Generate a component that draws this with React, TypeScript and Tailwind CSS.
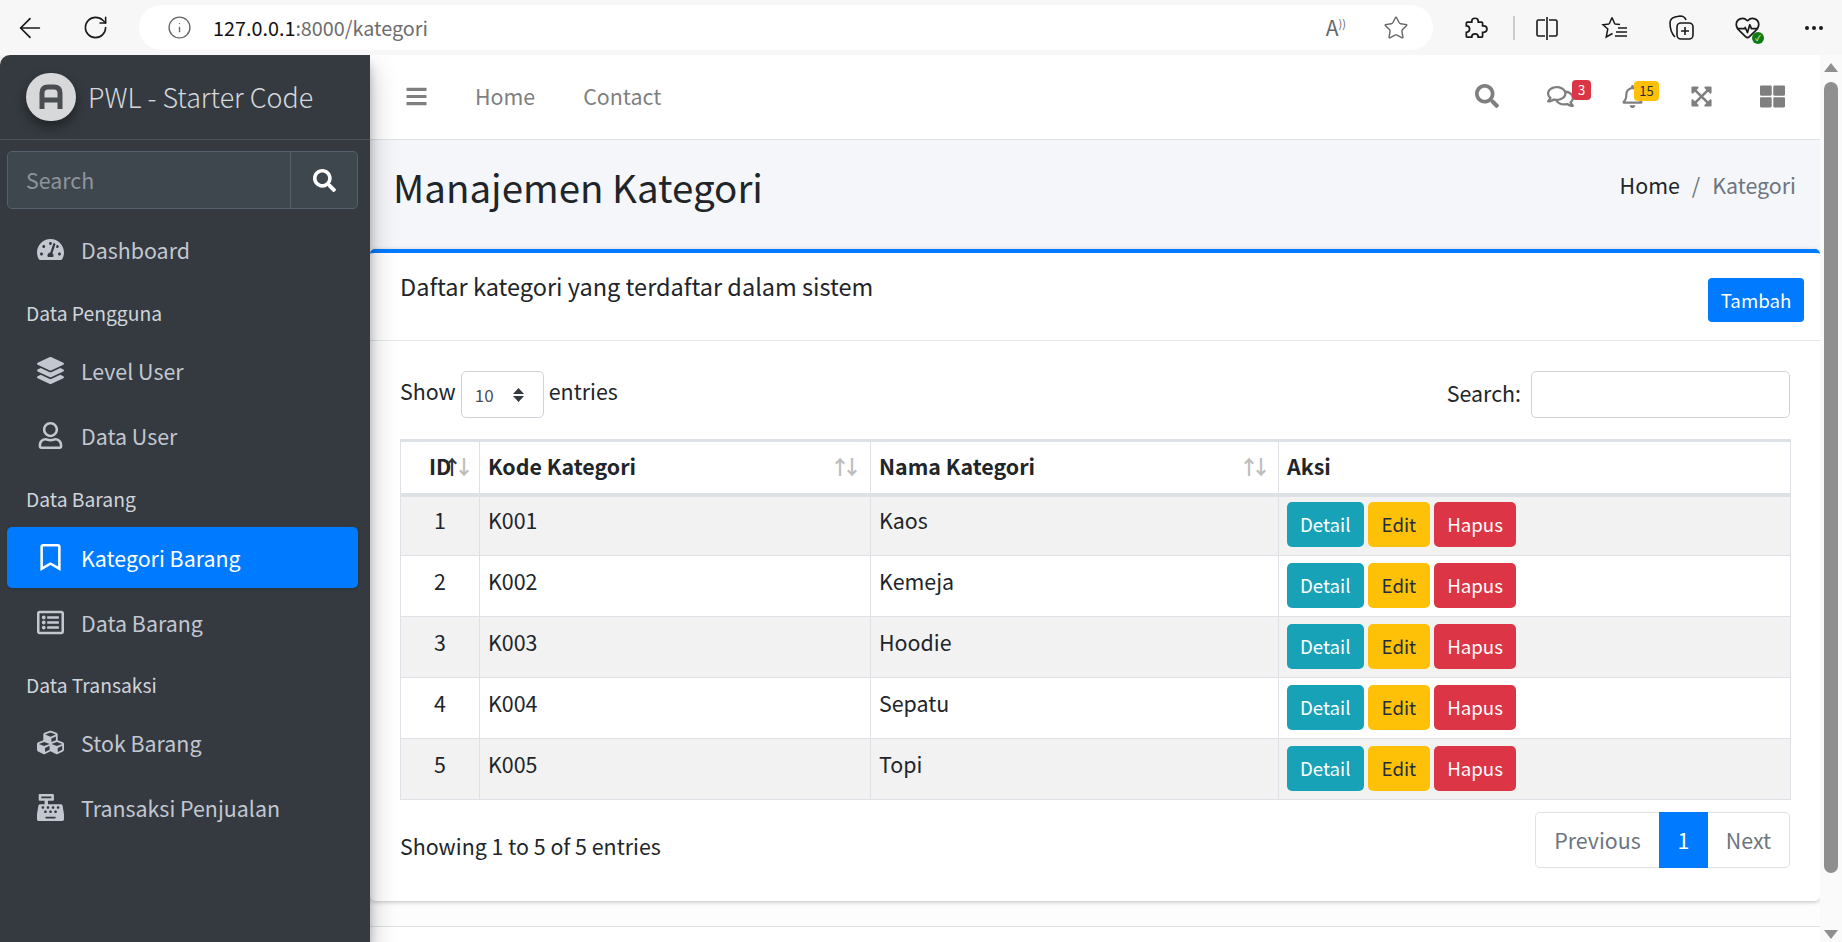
import { ArrowLeft, HeartPulse, Info, RotateCw, Star, MoreHorizontal } from "lucide-react";
import {
  FaBars,
  FaCashRegister,
  FaCubes,
  FaExpandArrowsAlt,
  FaLayerGroup,
  FaRegBell,
  FaRegBookmark,
  FaRegComments,
  FaRegListAlt,
  FaRegUser,
  FaSearch,
  FaTachometerAlt,
  FaThLarge,
} from "react-icons/fa";

const font = "font-['Noto_Sans_CJK_SC','Noto_Sans',sans-serif]";

const rows = [
  { id: 1, kode: "K001", nama: "Kaos" },
  { id: 2, kode: "K002", nama: "Kemeja" },
  { id: 3, kode: "K003", nama: "Hoodie" },
  { id: 4, kode: "K004", nama: "Sepatu" },
  { id: 5, kode: "K005", nama: "Topi" },
];

function BrowserBar() {
  return (
    <div className="relative z-20 flex h-[55px] items-center bg-[#f7f7f7] text-[#1a1a1a]">
      <div className="flex w-[139px] items-center pl-[14px] gap-[36px]">
        <ArrowLeft size={32} strokeWidth={1.3} />
        <RotateCw size={27} strokeWidth={1.4} />
      </div>
      <div className="flex h-[45px] w-[1294px] items-center rounded-full bg-white pl-[28px] pr-[24px]">
        <Info size={25} strokeWidth={1.3} className="text-[#666]" />
        <div className="ml-[21px] flex-1 text-[19.800px] leading-[26px] text-[#6d6d6d]">
          <span className="text-[#111]">127.0.0.1</span>:8000/kategori
        </div>
        <div className="mr-[37px] text-[21px] leading-none text-[#666]">
          A<span className="text-[11px] align-super">))</span>
        </div>
        <Star size={26} strokeWidth={1.3} className="text-[#666]" />
      </div>
      <div className="flex flex-1 items-center pl-[29px]">
        <svg width="26" height="26" viewBox="0 0 24 24" fill="none" stroke="#1a1a1a" strokeWidth="1.6">
          <path d="M9 6.500V6a3 3 0 0 1 6 0v.500h3a1 1 0 0 1 1 1V10h1a3 3 0 0 1 0 6h-1v3.500a1 1 0 0 1-1 1h-3a3 3 0 0 0-6 0H5a1 1 0 0 1-1-1V16a3 3 0 0 0 0-6V7.500a1 1 0 0 1 1-1z" />
        </svg>
        <div className="ml-[25px] h-[24px] w-[2px] bg-[#ccc]" />
        <svg width="26" height="26" viewBox="0 0 26 26" fill="none" stroke="#1a1a1a" strokeWidth="1.6" className="ml-[19px]">
          <path d="M11 5H4.500A1.500 1.500 0 0 0 3 6.500v13A1.500 1.500 0 0 0 4.500 21H11M13 2v23M15 5h6.500A1.500 1.500 0 0 1 23 6.500v13a1.500 1.500 0 0 1-1.500 1.500H15" />
        </svg>
        <svg width="28" height="26" viewBox="0 0 28 26" fill="none" stroke="#1a1a1a" strokeWidth="1.5" className="ml-[41px]">
          <path d="M11 2.500L13.800 9M8.200 9L11 2.500M8.200 9L2 9.800L6.800 14L5.200 22L11.500 18.500M13.800 9L19 9.500" />
          <path d="M17 13h9M15 17h11M14 21h12" />
        </svg>
        <svg width="27" height="27" viewBox="0 0 27 27" fill="none" stroke="#1a1a1a" strokeWidth="1.6" className="ml-[39px]">
          <path d="M7 23C4 20 2 15 2 9c0-3 1.500-5 5-6l5-1c3 0 5 1 6 4" />
          <rect x="9" y="9" width="16" height="16" rx="4" />
          <path d="M17 13v8M13 17h8" />
        </svg>
        <div className="relative ml-[39px]">
          <HeartPulse size={27} strokeWidth={1.5} />
          <div className="absolute bottom-[-3px] right-[-3px] flex h-[12px] w-[12px] items-center justify-center rounded-full bg-[#107c10] text-[8px] leading-none text-white">
            ✓
          </div>
        </div>
        <MoreHorizontal size={24} className="ml-[41px]" />
      </div>
    </div>
  );
}

function SideLink({ icon, label, active }: { icon: React.ReactNode; label: string; active?: boolean }) {
  return (
    <div
      className={`ml-[7px] mr-[12px] mb-[4px] flex h-[61px] items-center rounded-[5px] pl-[30px] text-[21.400px] leading-[30px] ${
        active ? "bg-[#007bff] text-white shadow-sm" : "text-[#c2c7d0]"
      }`}
    >
      <div className="flex w-[37px] justify-start text-[27px]">{icon}</div>
      <span className="ml-[7px]">{label}</span>
    </div>
  );
}

function SideHeader({ label, className }: { label: string; className: string }) {
  return <div className={`pl-[26px] text-[19.300px] leading-[26px] text-[#d0d4db] ${className}`}>{label}</div>;
}

function Sidebar() {
  return (
    <aside className="relative z-10 flex w-[370px] shrink-0 flex-col rounded-tl-[10px] bg-[#343a40] shadow-[0_14px_28px_rgba(0,0,0,0.25),0_10px_10px_rgba(0,0,0,0.22)]">
      <div className="flex h-[85px] items-center border-b border-[#4b545c] pl-[26px]">
        <div className="flex h-[48px] w-[50px] items-center justify-center rounded-full bg-[#d6d8da] shadow-[0_6px_12px_rgba(0,0,0,0.4)]">
          <svg width="26" height="26" viewBox="0 0 26 26" fill="none" stroke="#4a4d52" strokeWidth="5">
            <path d="M4 25V9c0-4 2-6 6-6h6c4 0 6 2 6 6v16M4 16h18" />
          </svg>
        </div>
        <div className="ml-[12px] text-[26.900px] font-light leading-[36px] text-[#d5d8dc]">PWL - Starter Code</div>
      </div>
      <div className="ml-[7px] mr-[12px] mt-[11px] flex h-[58px] rounded-[5px] border border-[#56606a] bg-[#3f474e]">
        <div className="flex flex-1 items-center pl-[18px] text-[21.400px] text-[#8d949b]">Search</div>
        <div className="flex w-[67px] items-center justify-center border-l border-[#56606a] text-[23px] text-white">
          <FaSearch />
        </div>
      </div>
      <div className="mt-[10px]">
        <SideLink icon={<FaTachometerAlt />} label="Dashboard" />
      </div>
      <SideHeader label="Data Pengguna" className="mt-[16px]" />
      <div className="mt-[14px]">
        <SideLink icon={<FaLayerGroup />} label="Level User" />
        <SideLink icon={<FaRegUser />} label="Data User" />
      </div>
      <SideHeader label="Data Barang" className="mt-[16px]" />
      <div className="mt-[15px]">
        <SideLink icon={<FaRegBookmark />} label="Kategori Barang" active />
        <SideLink icon={<FaRegListAlt />} label="Data Barang" />
      </div>
      <SideHeader label="Data Transaksi" className="mt-[15px]" />
      <div className="mt-[14px]">
        <SideLink icon={<FaCubes />} label="Stok Barang" />
        <SideLink icon={<FaCashRegister />} label="Transaksi Penjualan" />
      </div>
    </aside>
  );
}

function Navbar() {
  return (
    <div className="flex h-[85px] items-center border-b border-[#dee2e6] bg-white pb-[2px] pl-[35px] pr-[35px] text-[#7f7f7f]">
      <FaBars size={23} />
      <div className="ml-[47px] text-[21.400px] leading-[30px]">Home</div>
      <div className="ml-[48px] text-[21.400px] leading-[30px]">Contact</div>
      <div className="flex-1" />
      <FaSearch size={24} />
      <div className="relative ml-[48px]">
        <FaRegComments size={27} />
        <div className="absolute left-[25px] top-[-3px] flex h-[20px] w-[19px] items-center justify-center rounded-[4px] bg-[#dc3545] text-[13px] leading-none text-white">
          3
        </div>
      </div>
      <div className="relative ml-[47px]">
        <FaRegBell size={23} />
        <div className="absolute left-[13px] top-[-4px] flex h-[20px] w-[25px] items-center justify-center rounded-[4px] bg-[#ffc107] text-[13px] leading-none text-[#1f2d3d]">
          15
        </div>
      </div>
      <FaExpandArrowsAlt size={23} className="ml-[46px]" />
      <FaThLarge size={25} className="ml-[47px]" />
    </div>
  );
}

function SortIcon({ active, right }: { active?: boolean; right: string }) {
  return (
    <span className={`absolute top-[11px] text-[20px] font-bold leading-[28px] tracking-[-8px] ${right}`}>
      <span className={active ? "text-[#333]" : "text-[#bdbdbd]"}>↑</span>
      <span className="text-[#bdbdbd]">↓</span>
    </span>
  );
}

function ActionButton({ label, color }: { label: string; color: string }) {
  return <div className={`flex h-[45px] items-center rounded-[5px] text-[18.700px] leading-none ${color}`}>{label}</div>;
}

function KategoriTable() {
  return (
    <table className="mt-[21px] w-[1391px] table-fixed border-collapse text-[21.400px] leading-[30px] text-[#212529]">
      <thead>
        <tr className="h-[54px] border-x border-t-[3px] border-b-[4px] border-x-[#dee2e6] border-t-[#dee2e6] border-b-[#dee2e6] font-bold">
          <th className="relative w-[79px] border-r border-[#dee2e6] pb-[2px] pl-[28px] text-left">
            ID
            <SortIcon active right="right-[13px]" />
          </th>
          <th className="relative w-[391px] border-r border-[#dee2e6] pb-[2px] pl-[8px] text-left">
            Kode Kategori
            <SortIcon right="right-[16px]" />
          </th>
          <th className="relative w-[408px] border-r border-[#dee2e6] pb-[2px] pl-[8px] text-left">
            Nama Kategori
            <SortIcon right="right-[15px]" />
          </th>
          <th className="pb-[2px] pl-[8px] text-left">Aksi</th>
        </tr>
      </thead>
      <tbody>
        {rows.map((row, i) => (
          <tr key={row.id} className={`h-[61px] border border-[#dee2e6] ${i % 2 === 0 ? "bg-[#f2f2f2]" : "bg-white"}`}>
            <td className="border-r border-[#dee2e6] pb-[11px] text-center">{row.id}</td>
            <td className="border-r border-[#dee2e6] pb-[11px] pl-[8px]">{row.kode}</td>
            <td className="border-r border-[#dee2e6] pb-[11px] pl-[8px]">{row.nama}</td>
            <td className="pb-[2px] pl-[8px]">
              <div className="flex gap-[4px]">
                <ActionButton label="Detail" color="bg-[#17a2b8] px-[13px] text-white" />
                <ActionButton label="Edit" color="bg-[#ffc107] px-[14px] text-[#1f2d3d]" />
                <ActionButton label="Hapus" color="bg-[#dc3545] px-[13px] text-white" />
              </div>
            </td>
          </tr>
        ))}
      </tbody>
    </table>
  );
}

function Card() {
  return (
    <div className="h-[652px] rounded-[5px] border-t-[4px] border-[#007bff] bg-white shadow-[0_1px_4px_rgba(0,0,0,0.25)]">
      <div className="flex h-[88px] border-b border-[#e3e6ea] pl-[30px] pr-[16px]">
        <div className="mt-[18px] flex-1 text-[23.500px] leading-[30px] text-[#212529]">Daftar kategori yang terdaftar dalam sistem</div>
        <div className="mt-[25px] flex h-[44px] w-[96px] items-center justify-center rounded-[4px] bg-[#007bff] text-[18.700px] leading-none text-white">
          Tambah
        </div>
      </div>
      <div className="pl-[30px] pr-[30px] pt-[30px] text-[21.400px] leading-[30px] text-[#212529]">
        <div className="flex items-start justify-between">
          <div className="flex h-[47px] items-start">
            <span className="mt-[5px]">Show</span>
            <div className="ml-[5px] flex h-[47px] w-[83px] items-center rounded-[5px] border border-[#ced4da] pl-[13px] text-[17px] text-[#495057]">
              10
              <svg width="13" height="16" viewBox="0 0 13 16" fill="#343a40" className="ml-[18px]">
                <path d="M6.500 1L12 7H1zM6.500 15L1 9h11z" />
              </svg>
            </div>
            <span className="ml-[5px] mt-[5px]">entries</span>
          </div>
          <div className="flex items-center">
            <span className="pb-[3px]">Search:</span>
            <div className="ml-[10px] h-[47px] w-[259px] rounded-[5px] border border-[#ced4da]" />
          </div>
        </div>
        <KategoriTable />
        <div className="mt-[12px] flex items-start justify-between">
          <div className="mt-[19px]">Showing 1 to 5 of 5 entries</div>
          <div className="flex h-[56px] items-center rounded-[5px] border border-[#dee2e6] text-[#6c757d]">
            <div className="flex w-[123px] justify-center">Previous</div>
            <div className="flex h-[56px] w-[49px] items-center justify-center bg-[#007bff] text-white">1</div>
            <div className="flex w-[81px] justify-center">Next</div>
          </div>
        </div>
      </div>
    </div>
  );
}

function Scrollbar() {
  return (
    <div className="flex w-[22px] shrink-0 flex-col items-center bg-[#fafafa] pt-[8px]">
      <div className="h-0 w-0 border-x-[7px] border-b-[9px] border-x-transparent border-b-[#8f8f8f]" />
      <div className="mt-[10px] h-[791px] w-[14px] rounded-full bg-[#8f8f8f]" />
      <div className="mt-[auto] mb-[3px] h-0 w-0 border-x-[7px] border-t-[9px] border-x-transparent border-t-[#8f8f8f]" />
    </div>
  );
}

export default function App() {
  return (
    <div className={`flex h-[942px] w-[1842px] flex-col overflow-hidden bg-[#f7f7f7] ${font}`}>
      <BrowserBar />
      <div className="flex flex-1 overflow-hidden">
        <Sidebar />
        <div className="flex min-w-0 flex-1 flex-col bg-[#fdfdfd]">
          <Navbar />
          <div className="flex h-[109px] items-start justify-between bg-[#f4f6f9] pl-[23px] pr-[24px]">
            <h1 className="mt-[21px] text-[38.500px] font-normal leading-[50px] text-[#212529]">Manajemen Kategori</h1>
            <div className="mt-[30px] flex text-[21.400px] leading-[30px]">
              <span className="text-[#212529]">Home</span>
              <span className="mx-[12px] text-[#6c757d]">/</span>
              <span className="text-[#6c757d]">Kategori</span>
            </div>
          </div>
          <Card />
          <div className="mt-[25px] flex-1 border-t border-[#dee2e6] bg-white" />
        </div>
        <Scrollbar />
      </div>
    </div>
  );
}
